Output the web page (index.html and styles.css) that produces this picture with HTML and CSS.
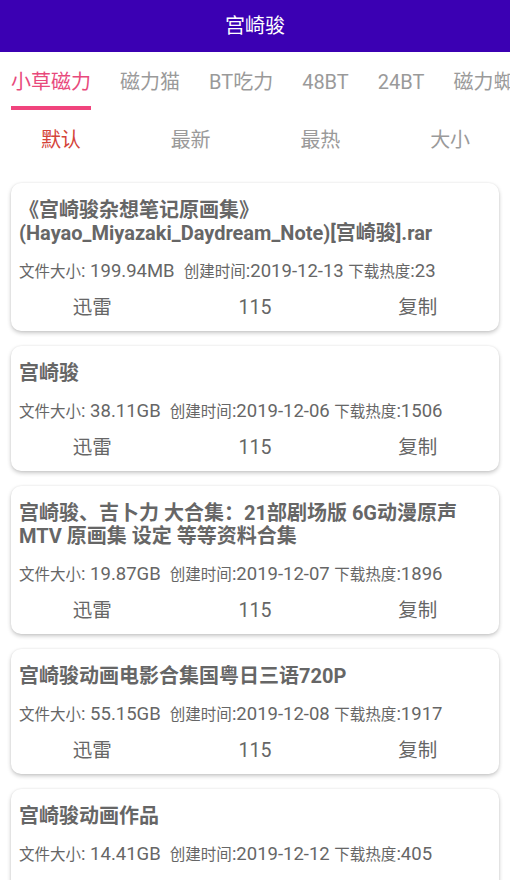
FILE: index.html
```html
<!DOCTYPE html>
<html lang="zh-CN">
<head>
    <meta charset="UTF-8">
    <meta name="viewport" content="width=device-width, initial-scale=1.0">
    <title>宫崎骏</title>
    <link rel="stylesheet" href="styles.css">
</head>
<body>
    <header class="topbar">宫崎骏</header>

    <nav class="tabs">
        <div class="tab active"><span>小草磁力</span><i class="bar"></i></div>
        <div class="tab"><span>磁力猫</span></div>
        <div class="tab"><span>BT吃力</span></div>
        <div class="tab"><span>48BT</span></div>
        <div class="tab"><span>24BT</span></div>
        <div class="tab"><span>磁力蜘蛛</span></div>
    </nav>

    <div class="sorts">
        <div class="sort active">默认</div>
        <div class="sort">最新</div>
        <div class="sort">最热</div>
        <div class="sort">大小</div>
    </div>

    <div class="list">
        <div class="card">
            <div class="title">《宫崎骏杂想笔记原画集》(Hayao_Miyazaki_Daydream_Note)[宫崎骏].rar</div>
            <div class="meta"><span class="k">文件大小</span>: 199.94MB&nbsp; <span class="k">创建时间</span>:2019-12-13 <span class="k">下载热度</span>:23</div>
            <div class="actions"><span>迅雷</span><span>115</span><span>复制</span></div>
        </div>
        <div class="card">
            <div class="title">宫崎骏</div>
            <div class="meta"><span class="k">文件大小</span>: 38.11GB&nbsp; <span class="k">创建时间</span>:2019-12-06 <span class="k">下载热度</span>:1506</div>
            <div class="actions"><span>迅雷</span><span>115</span><span>复制</span></div>
        </div>
        <div class="card">
            <div class="title">宫崎骏、吉卜力 大合集：21部剧场版 6G动漫原声 MTV 原画集 设定 等等资料合集</div>
            <div class="meta"><span class="k">文件大小</span>: 19.87GB&nbsp; <span class="k">创建时间</span>:2019-12-07 <span class="k">下载热度</span>:1896</div>
            <div class="actions"><span>迅雷</span><span>115</span><span>复制</span></div>
        </div>
        <div class="card">
            <div class="title">宫崎骏动画电影合集国粤日三语720P</div>
            <div class="meta"><span class="k">文件大小</span>: 55.15GB&nbsp; <span class="k">创建时间</span>:2019-12-08 <span class="k">下载热度</span>:1917</div>
            <div class="actions"><span>迅雷</span><span>115</span><span>复制</span></div>
        </div>
        <div class="card">
            <div class="title">宫崎骏动画作品</div>
            <div class="meta"><span class="k">文件大小</span>: 14.41GB&nbsp; <span class="k">创建时间</span>:2019-12-12 <span class="k">下载热度</span>:405</div>
            <div class="actions"><span>迅雷</span><span>115</span><span>复制</span></div>
        </div>
    </div>
</body>
</html>
```

FILE: styles.css
```css
body { margin: 0; font-family: Roboto, "Noto Sans CJK SC", sans-serif; background: #fff; overflow: hidden; }

.topbar { height: 52px; line-height: 52px; background: #3b00b3; color: #fff; text-align: center; font-size: 20px; }

.tabs { display: flex; gap: 29px; padding: 18px 0 0 11px; height: 42px; white-space: nowrap; overflow: hidden; }
.tab { display: flex; flex-direction: column; align-items: stretch; flex-shrink: 0; }
.tab span { font-size: 20px; line-height: 24px; color: #9a9a9a; }
.tab.active span { color: #e8497c; }
.tab .bar { display: block; height: 4px; margin-top: 12px; background: #f0447d; }

.sorts { display: grid; grid-template-columns: repeat(4, 1fr); padding: 16px 0; margin: 0 -5px 0 -4px; }
.sort { text-align: center; font-size: 20px; line-height: 24px; color: #9a9a9a; }
.sort.active { color: #d4443a; }

.list { padding: 15px 11px 0; }
.card { background: #fff; border-radius: 10px; padding: 16px 8px 11px; margin-bottom: 15px;
        box-shadow: 0 2px 4px rgba(0, 0, 0, 0.22), 0 0 2px rgba(0, 0, 0, 0.08); }
.title { font-size: 20px; line-height: 23px; font-weight: bold; color: #666; }
.meta { margin-top: 16px; font-size: 18.5px; line-height: 20px; height: 20px; color: #666; white-space: nowrap; }
.meta .k { font-size: 15.5px; }
.actions { display: grid; grid-template-columns: repeat(3, 1fr); margin: 15px -8px 0; }
.actions span { text-align: center; font-size: 19.5px; line-height: 24px; color: #666; }
```
